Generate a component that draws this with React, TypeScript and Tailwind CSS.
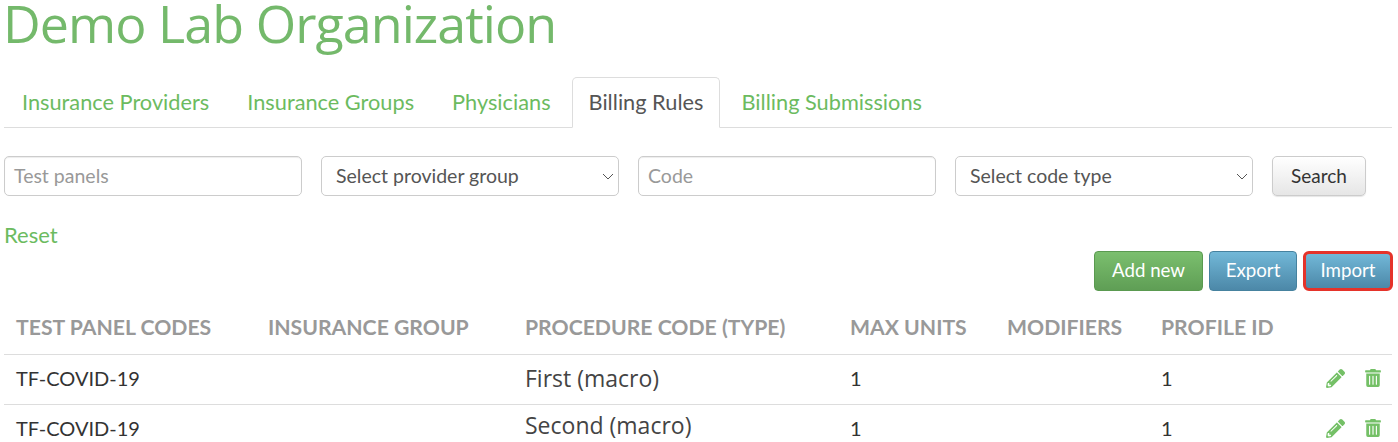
import { FaPencilAlt, FaTrashAlt } from "react-icons/fa";

const tabs = ["Insurance Providers", "Insurance Groups", "Physicians", "Billing Rules", "Billing Submissions"];
const headers = ["TEST PANEL CODES", "INSURANCE GROUP", "PROCEDURE CODE (TYPE)", "MAX UNITS", "MODIFIERS", "PROFILE ID"];
const rows = ["First (macro)", "Second (macro)"];

function Chevron() {
  return (
    <svg width="12" height="7" viewBox="0 0 12 7" fill="none" stroke="#555" strokeWidth="1" className="shrink-0">
      <path d="M1 1l5 5 5-5" />
    </svg>
  );
}

function Select({ label }: { label: string }) {
  return (
    <div className="flex h-10 w-[298px] items-center justify-between rounded-[5px] border border-[#ccc] bg-white pl-[14px] pr-[4px] text-[19.5px] text-[#555]">
      <span>{label}</span>
      <Chevron />
    </div>
  );
}

function TextBox({ label }: { label: string }) {
  return (
    <div className="flex h-10 w-[298px] items-center rounded-[5px] border border-[#ccc] bg-white px-[9px] text-[19.5px] text-[#999] shadow-[inset_0_1px_1px_rgba(0,0,0,0.075)]">
      {label}
    </div>
  );
}

export default function App() {
  return (
    <div className="h-[442px] w-[1398px] overflow-hidden bg-white pl-1 pr-[6px] font-['Lato','Liberation_Sans',sans-serif]">
      <h1 className="-ml-px h-[77px] font-['Open_Sans',sans-serif] text-[52px] font-medium leading-[46px] tracking-[-0.95px] text-[#74b96b]">Demo Lab Organization</h1>

      <div className="flex h-[51px] items-stretch border-b border-[#ddd] pl-px text-[21.75px]">
        {tabs.map((t) => {
          const active = t === "Billing Rules";
          return (
            <div
              key={t}
              className={
                active
                  ? "-mb-px mr-[4px] flex h-[51px] items-center rounded-t-[5px] border border-[#ddd] border-b-white bg-white px-[16px] text-[#555]"
                  : "mr-[4px] flex items-center px-[17px] text-[#6cbb5f]"
              }
            >
              {t}
            </div>
          );
        })}
      </div>

      <div className="mt-[28px] flex gap-[19px]">
        <TextBox label="Test panels" />
        <Select label="Select provider group" />
        <TextBox label="Code" />
        <Select label="Select code type" />
        <div className="flex h-10 w-[94px] items-center justify-center rounded-[5px] border border-[#ccc] bg-gradient-to-b from-white to-[#e6e6e6] text-[19px] text-[#333] shadow-[0_1px_1px_rgba(0,0,0,0.1)]">
          Search
        </div>
      </div>

      <div className="mt-[26px] h-[28px] text-[22px] leading-[26px] text-[#6cbb5f]">Reset</div>

      <div className="-mr-px mt-[1px] flex h-10 justify-end gap-[6px] text-[18.7px] text-white">
        <div className="flex w-[109px] items-center justify-center rounded-[4px] border border-[#5a9a50] bg-gradient-to-b from-[#7bbf6e] to-[#5f9e55] pb-[2px]">Add new</div>
        <div className="flex w-[88px] items-center justify-center rounded-[4px] border border-[#46829f] bg-gradient-to-b from-[#72b8d8] to-[#4c88a8] pb-[2px]">Export</div>
        <div className="flex w-[90px] items-center justify-center rounded-[6px] border-[3px] border-[#e5332a] bg-gradient-to-b from-[#72b8d8] to-[#4c88a8] pb-[2px]">Import</div>
      </div>

      <table className="w-[1388px] table-fixed border-collapse">
        <colgroup>
          <col className="w-[252px]" />
          <col className="w-[257px]" />
          <col className="w-[325px]" />
          <col className="w-[157px]" />
          <col className="w-[154px]" />
          <col className="w-[243px]" />
        </colgroup>
        <thead>
          <tr className="h-[63px] border-b border-[#ddd]">
            {headers.map((h) => (
              <th key={h} className="px-3 pt-[12px] text-left text-[21.2px] font-bold text-[#999]">{h}</th>
            ))}
          </tr>
        </thead>
        <tbody>
          {rows.map((r, i) => (
            <tr key={r} className="h-[50px] border-b border-[#ddd] text-[20px] text-[#333]">
              <td className="px-3 pb-[2px]">TF-COVID-19</td>
              <td className="px-3"></td>
              <td className={i === 0 ? "px-3 pb-[2px] font-['Open_Sans',sans-serif] text-[23px] text-[#444]" : "px-3 pb-[7px] font-['Open_Sans',sans-serif] text-[23px] text-[#444]"}>{r}</td>
              <td className="px-3 pb-[2px]">1</td>
              <td className="px-3"></td>
              <td className="px-3 pb-[2px]">
                <div className="flex items-center justify-between">
                  <span>1</span>
                  <span className="-mr-[2px] flex items-center gap-[19px] text-[#74c066]">
                    <FaPencilAlt size={19} />
                    <FaTrashAlt size={18} />
                  </span>
                </div>
              </td>
            </tr>
          ))}
        </tbody>
      </table>
    </div>
  );
}
